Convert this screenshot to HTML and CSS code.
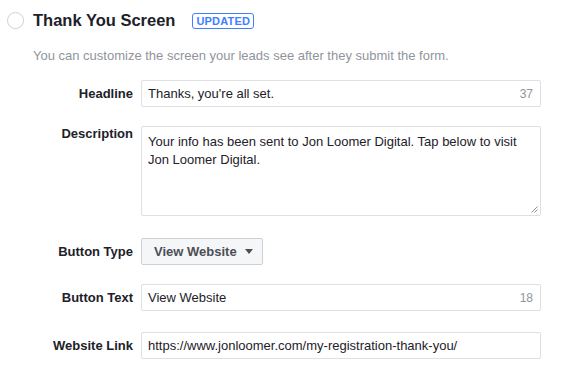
FILE: index.html
```html
<!DOCTYPE html>
<html lang="en">
<head>
    <meta charset="UTF-8">
    <title>Thank You Screen</title>
    <link rel="stylesheet" href="styles.css">
</head>
<body>
    <div class="section">
        <div class="section-header">
            <span class="radio"></span>
            <h2>Thank You Screen</h2>
            <span class="badge">UPDATED</span>
        </div>
        <p class="section-desc">You can customize the screen your leads see after they submit the form.</p>

        <div class="form">
            <div class="form-row">
                <label>Headline</label>
                <div class="field">
                    <span class="field-text">Thanks, you're all set.</span>
                    <span class="counter">37</span>
                </div>
            </div>

            <div class="form-row form-row-top">
                <label>Description</label>
                <div class="field field-area">
                    <span class="field-text">Your info has been sent to Jon Loomer Digital. Tap below to visit Jon Loomer Digital.</span>
                    <svg class="grip" width="7" height="7" viewBox="0 0 7 7">
                        <path d="M6.5 0.5 L0.5 6.5 M6.5 3.5 L3.5 6.5" stroke="#8d949e" stroke-width="1"/>
                    </svg>
                </div>
            </div>

            <div class="form-row row-spaced">
                <label>Button Type</label>
                <div class="select">
                    View Website
                    <span class="caret"></span>
                </div>
            </div>

            <div class="form-row">
                <label>Button Text</label>
                <div class="field">
                    <span class="field-text">View Website</span>
                    <span class="counter">18</span>
                </div>
            </div>

            <div class="form-row row-link">
                <label>Website Link</label>
                <div class="field">
                    <span class="field-text">https://www.jonloomer.com/my-registration-thank-you/</span>
                </div>
            </div>
        </div>
    </div>
</body>
</html>
```

FILE: styles.css
```css
* {
    margin: 0;
    padding: 0;
    box-sizing: border-box;
}

body {
    background: #fff;
    font-family: "Liberation Sans", Arial, sans-serif;
    color: #1d2129;
}

.section {
    padding: 12px 0 0 7px;
}

/* Header */
.section-header {
    display: flex;
    align-items: center;
    height: 17px;
}

.radio {
    width: 17px;
    height: 17px;
    border: 1px solid #ccd0d5;
    border-radius: 50%;
    margin-right: 9px;
}

.section-header h2 {
    font-size: 16.5px;
    font-weight: bold;
    color: #1d2129;
}

.badge {
    margin-left: 17px;
    border: 1px solid #4080ff;
    border-radius: 3px;
    color: #4080ff;
    font-size: 11px;
    font-weight: bold;
    letter-spacing: 0.2px;
    line-height: 14px;
    padding: 0 3px;
}

.section-desc {
    margin: 19px 0 0 26px;
    font-size: 13px;
    line-height: 16px;
    color: #90949c;
}

/* Form */
.form {
    margin-top: 16px;
    display: flex;
    flex-direction: column;
    gap: 19px;
}

.form-row {
    display: flex;
    align-items: center;
}

.form-row-top {
    align-items: flex-start;
}

.row-spaced {
    margin-top: 3px;
}

.row-link {
    margin-top: 2px;
}

.form-row label {
    width: 126px;
    text-align: right;
    font-size: 13px;
    font-weight: bold;
    color: #1d2129;
    margin-right: 8px;
}

.field {
    width: 400px;
    height: 27px;
    border: 1px solid #dddfe2;
    border-radius: 2px;
    display: flex;
    align-items: center;
    justify-content: space-between;
    padding: 0 7px 0 6px;
    font-size: 13px;
}

.counter {
    color: #90949c;
    font-size: 12px;
}

.field-area {
    position: relative;
    height: 90px;
    align-items: flex-start;
    padding: 6px 20px 0 6px;
    line-height: 18px;
}

.grip {
    position: absolute;
    right: 2px;
    bottom: 2px;
}

.select {
    height: 27px;
    width: 122px;
    background: #f5f6f7;
    border: 1px solid #ccd0d5;
    border-radius: 2px;
    display: flex;
    align-items: center;
    padding-left: 12px;
    font-size: 13px;
    font-weight: bold;
    color: #4b4f56;
}

.caret {
    margin-left: 8px;
    width: 0;
    height: 0;
    border-left: 4px solid transparent;
    border-right: 4px solid transparent;
    border-top: 5px solid #4b4f56;
}
```
